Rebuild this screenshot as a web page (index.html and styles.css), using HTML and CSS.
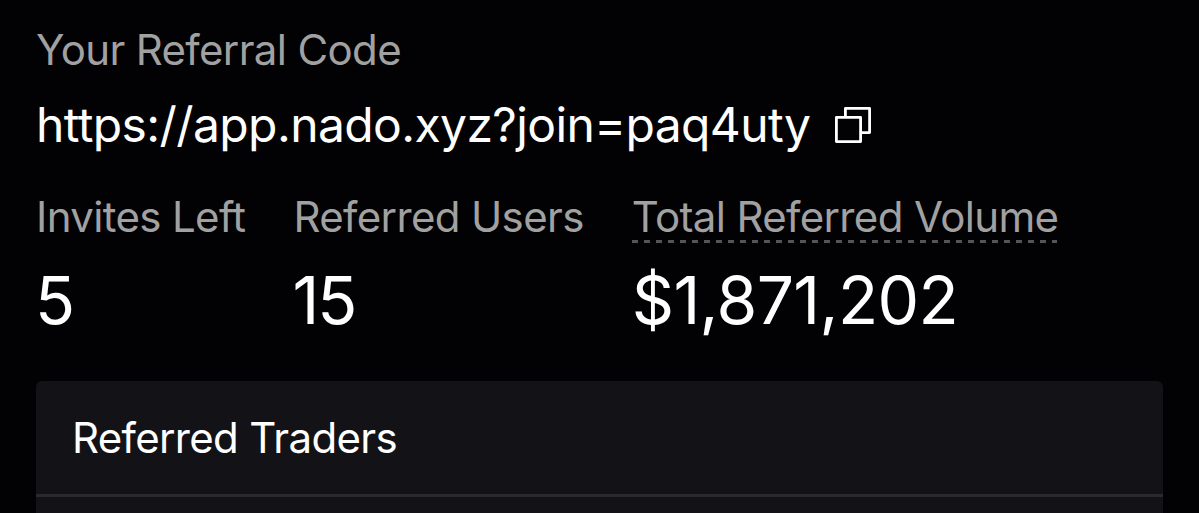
FILE: index.html
```html
<!DOCTYPE html>
<html lang="en">
<head>
    <meta charset="UTF-8">
    <meta name="viewport" content="width=device-width, initial-scale=1.0">
    <title>Referrals</title>
    <link rel="stylesheet" href="styles.css">
</head>
<body>
    <main class="page">
        <section class="referral">
            <div class="label">Your Referral Code</div>
            <div class="codeRow">
                <span class="code">https://app.nado.xyz?join=paq4uty</span>
                <button class="copyButton" type="button" aria-label="Copy">
                    <svg width="38" height="38" viewBox="0 0 38 38" fill="none" stroke="currentColor" stroke-width="2.8" stroke-linejoin="round">
                        <path d="M11.400 11.400V2.400H35.600V26.600H26.600"/>
                        <rect x="2.400" y="11.400" width="24.200" height="24.200"/>
                    </svg>
                </button>
            </div>
        </section>

        <section class="stats">
            <div class="stat">
                <div class="label">Invites Left</div>
                <div class="value">5</div>
            </div>
            <div class="stat">
                <div class="label">Referred Users</div>
                <div class="value">15</div>
            </div>
            <div class="stat">
                <div class="label hint">Total Referred Volume</div>
                <div class="value amount">$1,871,202</div>
            </div>
        </section>

        <section class="panel">
            <h2 class="panelTitle">Referred Traders</h2>
        </section>
    </main>
</body>
</html>
```

FILE: styles.css
```css
* {
    box-sizing: border-box;
}

body {
    margin: 0;
    background-color: #020204;
    color: #fff;
    font-family: Inter, "Liberation Sans", sans-serif;
}

.page {
    display: flex;
    flex-direction: column;
    height: 513px;
    padding: 24px 36px 0;
}

.label {
    font-size: 42px;
    line-height: 52px;
    letter-spacing: -0.64px;
    color: #a1a1a1;
    white-space: nowrap;
}

.codeRow {
    display: flex;
    align-items: center;
    gap: 24px;
    height: 60px;
    margin-top: 19px;
}

.code {
    font-size: 48px;
    line-height: 60px;
    letter-spacing: -0.6px;
}

.copyButton {
    display: flex;
    padding: 0 0 1px;
    border: 0;
    background: none;
    color: #fff;
}

.stats {
    display: flex;
    gap: 48px;
    margin-top: 36px;
}

.hint {
    background: repeating-linear-gradient(90deg, #555 0 6px, transparent 6px 12px) left bottom / 425px 3px no-repeat;
}

.value {
    margin-top: 17px;
    font-size: 66px;
    line-height: 80px;
    letter-spacing: -2px;
    text-indent: -1px;
}

.amount {
    letter-spacing: -0.65px;
    text-indent: 0;
}

.panel {
    flex: 1;
    margin-top: 41px;
    border-radius: 6px 6px 0 0;
    background-color: #131317;
}

.panelTitle {
    height: 116px;
    margin: 0;
    padding: 0 36px;
    border-bottom: 3px solid #2a2a2e;
    font-size: 42px;
    font-weight: 400;
    line-height: 113px;
    letter-spacing: -0.67px;
}
```
